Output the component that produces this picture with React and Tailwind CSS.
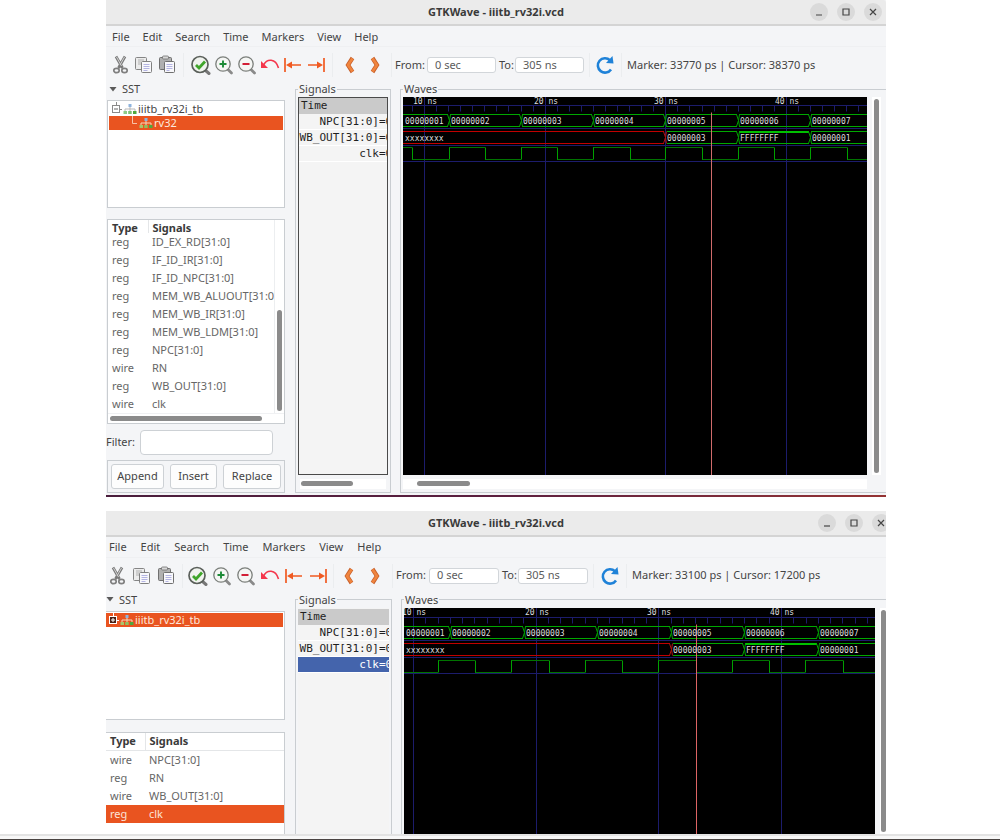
import React from "react";

const menus = ["File", "Edit", "Search", "Time", "Markers", "View", "Help"];

function Icon({ children }) {
  return (
    <svg width="20" height="20" viewBox="0 0 20 20" fill="none" className="shrink-0" aria-hidden="true">
      {children}
    </svg>
  );
}

const Cut = () => (
  <Icon>
    <path d="M5 1.500 11.500 13M14 1.500 7.500 13" stroke="#7a7a7a" strokeWidth="2.800" />
    <path d="M5.500 2 10.500 11M13.500 2 9 10" stroke="#d0d0d0" strokeWidth="1" />
    <ellipse cx="5.500" cy="15.500" rx="2.700" ry="2.200" stroke="#808080" strokeWidth="1.700" />
    <ellipse cx="13.500" cy="15.500" rx="2.700" ry="2.200" stroke="#808080" strokeWidth="1.700" />
  </Icon>
);
const Copy = () => (
  <Icon>
    <rect x="1.500" y="2.500" width="11" height="12" rx="1" fill="#ececec" stroke="#858585" />
    <path d="M4 5h6M4 7h3M4 9h3" stroke="#b0b0b0" />
    <rect x="7.500" y="6.500" width="10" height="11" rx="1" fill="#f8f8fb" stroke="#808080" />
    <path d="M9.500 9.500h6M9.500 11.500h6M9.500 13.500h6M9.500 15.500h4" stroke="#b4b4e2" />
  </Icon>
);
const Paste = () => (
  <Icon>
    <rect x="2.500" y="2.500" width="12" height="12" rx="1" fill="#b0b0b0" stroke="#707070" />
    <rect x="5.500" y="1" width="6" height="3" rx="1" fill="#d8d8d8" stroke="#707070" strokeWidth="0.800" />
    <rect x="7.500" y="6.500" width="10" height="11" rx="1" fill="#f8f8fb" stroke="#707070" />
    <path d="M9.500 9.500h6M9.500 11.500h6M9.500 13.500h6M9.500 15.500h3" stroke="#b4b4e2" />
  </Icon>
);
const ZoomFit = () => (
  <Icon>
    <path d="m14 15 4 3.500" stroke="#777" strokeWidth="3" strokeLinecap="round" />
    <circle cx="9" cy="9.500" r="8" fill="#f0f3ee" stroke="#5a5f5a" strokeWidth="1.700" />
    <path d="m5 10 3 3 6-6.500" stroke="#3fa52a" strokeWidth="2.800" />
  </Icon>
);
const ZoomIn = () => (
  <Icon>
    <path d="m14 14.500 3.500 3.500" stroke="#8a8a8a" strokeWidth="2.800" strokeLinecap="round" />
    <circle cx="9" cy="9" r="7.200" fill="#f5f6f4" stroke="#7b7f7b" strokeWidth="1.300" />
    <path d="M9 5.500v7M5.500 9h7" stroke="#1c8a36" strokeWidth="1.900" />
  </Icon>
);
const ZoomOut = () => (
  <Icon>
    <path d="m14 14.500 3.500 3.500" stroke="#8a8a8a" strokeWidth="2.800" strokeLinecap="round" />
    <circle cx="9" cy="9" r="7.200" fill="#f5f6f4" stroke="#7b7f7b" strokeWidth="1.300" />
    <path d="M5.500 9h7" stroke="#d0142c" strokeWidth="1.900" />
  </Icon>
);
const Undo = () => (
  <Icon>
    <path d="M3.500 10C7 3.500 15.500 3 18.500 13" stroke="#f4364c" strokeWidth="1.600" />
    <path d="M1 6v7h7Z" fill="#f4364c" />
  </Icon>
);
const ToStart = () => (
  <Icon>
    <path d="M2 3v14M5 10h13" stroke="#f05a22" strokeWidth="1.700" />
    <path d="m3 10 6-3.500v7Z" fill="#f05a22" />
  </Icon>
);
const ToEnd = () => (
  <Icon>
    <path d="M18 3v14M2 10h13" stroke="#f05a22" strokeWidth="1.700" />
    <path d="m17 10-6-3.500v7Z" fill="#f05a22" />
  </Icon>
);
const Prev = () => (
  <Icon>
    <path d="M12.500 3 8 10l4.500 7" stroke="#c8612c" strokeWidth="4.200" />
    <path d="M12.500 3.500 8 10l4.500 6.500" stroke="#f0853e" strokeWidth="2.600" />
  </Icon>
);
const Next = () => (
  <Icon>
    <path d="m7.500 3 4.500 7-4.500 7" stroke="#c8612c" strokeWidth="4.200" />
    <path d="m7.500 3.500 4.500 6.500-4.500 6.500" stroke="#f0853e" strokeWidth="2.600" />
  </Icon>
);
const Reload = () => (
  <Icon>
    <path d="M15 5.200A7.200 7.200 0 1 0 16 14.500" stroke="#1f82d8" strokeWidth="2.600" />
    <path d="m17.500 1 1 7.500-7.500-.5Z" fill="#1f82d8" />
  </Icon>
);

function ScopeIcon({ onOrange }) {
  const stem = onOrange ? "#f6d5b8" : "#b9b9b9";
  return (
    <svg width="14" height="12" viewBox="0 0 14 12" className="shrink-0" aria-hidden="true">
      <path d="M7 3v5M2 8V6h10v2" stroke={stem} fill="none" />
      <rect x="5.500" y="1" width="3" height="3" fill="#8fb4de" />
      <rect x="0.500" y="8" width="3.500" height="3" fill={onOrange ? "#a9c46a" : "#8ecb86"} />
      <rect x="5.200" y="8" width="3.500" height="3" fill={onOrange ? "#8fbf5f" : "#7cc274"} />
      <rect x="10" y="8" width="3.500" height="3" fill="#4fa83e" />
    </svg>
  );
}

function Expander({ open, selected }) {
  const c = selected ? "#ffffff" : "#8a8a8a";
  return (
    <svg width="11" height="14" viewBox="0 0 11 14" className="shrink-0" aria-hidden="true">
      <path d="M5.500 0v3M9 7.500h2" stroke={c} />
      <rect x="1.500" y="3.500" width="7" height="7" fill={selected ? "#4a2015" : "#ffffff"} stroke={c} />
      <path d={open ? "M3 7h4" : "M3 7h4M5 5v4"} stroke={selected ? "#fff" : "#666"} />
    </svg>
  );
}

function Tool({ label, className, children }) {
  return (
    <button type="button" aria-label={label} className={`flex h-6 shrink-0 items-center justify-center ${className}`}>
      {children}
    </button>
  );
}

function Separator({ className }) {
  return (
    <div className={`flex h-6 shrink-0 justify-center ${className}`}>
      <div className="w-px bg-[#ebedef]" />
    </div>
  );
}

function TitleBar({ c }) {
  return (
    <header className={`grid h-[26px] shrink-0 grid-cols-[1fr_auto_1fr] items-center overflow-hidden border-b-2 border-[#d4d4d4] bg-[#ebebeb] ${c.titleBar}`}>
      <h1 className="col-start-2 text-[11px] leading-4 font-bold text-[#3a3a3a]">GTKWave - iiitb_rv32i.vcd</h1>
      <div className={`flex justify-end ${c.controls}`}>
        {[
          ["Minimize", "M6 12h6"],
          ["Maximize", "M6 6h6v6H6z"],
          ["Close", "m6 6 6 6m0-6-6 6"],
        ].map(([label, d]) => (
          <button key={label} type="button" aria-label={label} className="size-[18px] shrink-0 rounded-full bg-[#dadada]">
            <svg width="18" height="18" viewBox="0 0 18 18" fill="none" stroke="#454545" strokeWidth="1.200">
              <path d={d} />
            </svg>
          </button>
        ))}
      </div>
    </header>
  );
}

function Toolbar({ c }) {
  return (
    <div className={`flex h-9 shrink-0 items-center overflow-hidden ${c.toolbar}`}>
      <Tool label="Cut" className={c.tool}><Cut /></Tool>
      <Tool label="Copy" className={c.tool}><Copy /></Tool>
      <Tool label="Paste" className={c.tool}><Paste /></Tool>
      <Separator className={c.sepA} />
      <Tool label="Zoom fit" className={c.tool}><ZoomFit /></Tool>
      <Tool label="Zoom in" className={c.tool}><ZoomIn /></Tool>
      <Tool label="Zoom out" className={c.tool}><ZoomOut /></Tool>
      <Tool label="Zoom undo" className={c.tool}><Undo /></Tool>
      <Tool label="Zoom to start" className={c.tool}><ToStart /></Tool>
      <Tool label="Zoom to end" className={c.tool}><ToEnd /></Tool>
      <Separator className={c.sepB} />
      <Tool label="Previous edge" className={c.edge}><Prev /></Tool>
      <Tool label="Next edge" className={c.edge}><Next /></Tool>
      <Separator className="w-2" />
      <label htmlFor={`${c.id}-from`} className={`shrink-0 ${c.fromLabel}`}>From:</label>
      <input id={`${c.id}-from`} defaultValue="0 sec" className={`mr-[3px] h-4 min-w-0 shrink-0 rounded-[3px] border border-[#d2d6da] bg-white px-[7px] text-[#5c5c5c] ${c.field}`} />
      <label htmlFor={`${c.id}-to`} className="w-4 shrink-0">To:</label>
      <input id={`${c.id}-to`} defaultValue="305 ns" className={`h-4 min-w-0 shrink-0 rounded-[3px] border border-[#d2d6da] bg-white px-[7px] text-[#5c5c5c] ${c.field}`} />
      <Separator className={c.sepC} />
      <Tool label="Reload" className={c.reload}><Reload /></Tool>
      <Separator className="w-3" />
      <output className="whitespace-nowrap">{c.status}</output>
    </div>
  );
}

function ScopeTree({ c }) {
  return (
    <ul className={`shrink-0 border border-[#c9cdd1] bg-white pt-px ${c.box} ${c.treeBox}`}>
      {c.scopes.map((s) => (
        <li key={s.name} className={`flex h-[14px] items-center leading-[14px] ${s.row}`}>
          {s.child ? (
            <svg width="5" height="14" viewBox="0 0 5 14" className="mr-px shrink-0" aria-hidden="true">
              <path d="M0.500 0v7.500H5" fill="none" stroke="#f7c3a8" />
            </svg>
          ) : (
            <Expander open={s.open} selected={s.selected} />
          )}
          <span className="mx-px flex"><ScopeIcon onOrange={s.selected} /></span>
          <span>{s.name}</span>
        </li>
      ))}
    </ul>
  );
}

function SignalTable({ c }) {
  return (
    <table className={`w-full table-fixed border-collapse text-left ${c.table}`}>
      <thead className="sticky top-0 bg-white text-[#3a3a3a]">
        <tr className={`leading-4 ${c.headRow}`}>
          <th className={`border-r border-b border-[#e4e6e8] p-0 ${c.typeCell}`}>Type</th>
          <th className="border-b border-[#e4e6e8] p-0 pl-1">Signals</th>
        </tr>
      </thead>
      <tbody>
        {c.signals.map(([type, name]) => {
          const on = c.selectedSignal === name;
          return (
            <tr key={name} className={on ? "h-[18px] bg-[#e95420] leading-[18px] text-[#fbe3d8]" : "h-[18px] leading-[18px] text-[#666666]"}>
              <td className={`p-0 ${c.typeCell}`}>{type}</td>
              <td className="overflow-hidden p-0 pl-1 whitespace-nowrap">{name}</td>
            </tr>
          );
        })}
      </tbody>
    </table>
  );
}

function Frame({ title, className, children }) {
  return (
    <fieldset className={`flex min-w-0 flex-col border border-[#c9cdd1] pt-0.5 ${className}`}>
      <legend className="h-3 px-px leading-3">{title}</legend>
      {children}
    </fieldset>
  );
}

function SignalNames({ c }) {
  const base = "flex h-4 justify-end border-b border-white leading-4 whitespace-pre";
  return (
    <div className={`min-h-0 flex-1 overflow-hidden bg-[#f4f4f4] font-['DejaVu_Sans_Mono',monospace] text-[11px] text-[#1f1f1f] ${c.names}`}>
      <div className="h-4 bg-[#cacaca] pl-0.5 leading-4">Time</div>
      {["NPC[31:0]", "WB_OUT[31:0]", "clk"].map((n) => (
        <div key={n} className={n === c.selectedName ? `${base} bg-[#4464ac] text-white` : base}>
          <span>{n}</span>
          <span className={`shrink-0 overflow-hidden ${c.valueCell}`}>=0</span>
        </div>
      ))}
    </div>
  );
}

function busPath(xs, top, bottom) {
  let d = "";
  xs.slice(0, -1).forEach((x, i) => {
    const a = i === 0 ? x : x + 1;
    const b = xs[i + 1] - 1;
    d += `M${a} ${top}H${b}M${a} ${bottom}H${b}`;
  });
  return d;
}

function Transition({ x, top, bottom, color = "#00a000" }) {
  const m = (top + bottom) / 2;
  return (
    <path
      d={`M${x - 1.5} ${top}L${x + 0.5} ${m}L${x - 1.5} ${bottom}M${x + 1.5} ${top}L${x + 0.5} ${m}L${x + 1.5} ${bottom}`}
      stroke={color}
      fill="none"
    />
  );
}

function Waveform({ w }) {
  const end = 4000;
  const { y } = w;
  const ticks = [];
  for (let i = -1; i < 38; i++) ticks.push(Math.round(w.grid[0] + (i * (w.grid[3] - w.grid[0])) / 30) + 0.5);
  const rises = w.clk.filter((_, i) => i % 2 === 0);
  let highs = "";
  let lows = "";
  let edges = "";
  let cursor = 0;
  rises.forEach((r, i) => {
    const f = w.clk[i * 2 + 1];
    if (r > cursor) lows += `M${cursor} ${y.clkLow}H${r}`;
    highs += `M${r} ${y.clkHigh}H${f}`;
    if (r > 0) edges += `M${r + 0.5} ${y.clkHigh}V${y.clkLow}`;
    edges += `M${f + 0.5} ${y.clkHigh}V${y.clkLow}`;
    cursor = f;
  });
  lows += `M${cursor} ${y.clkLow}H${end}`;
  const change = w.bus[4];

  return (
    <svg width="100%" height="100%" className="block bg-black" fill="none" role="img" aria-label="Waveforms">
      <g stroke="#1c1c6c">
        {w.grid.map((x) => <path key={x} d={`M${x + 0.5} 0V4000`} />)}
        {y.rules.map((r) => <path key={r} d={`M0 ${r}H${end}`} />)}
        {ticks.map((x) => <path key={x} d={`M${x} ${y.rules[0]}v6`} />)}
      </g>
      <path d={busPath([0, ...w.bus, end], y.aTop, y.aBottom)} stroke="#00a800" />
      {w.bus.map((x) => <Transition key={x} x={x} top={y.aTop} bottom={y.aBottom} />)}
      <path d={busPath([0, w.bus[3]], y.bTop, y.bBottom)} stroke="#c00000" />
      <path d={busPath([w.bus[3] + 2, change, w.bus[5], end], y.bTop, y.bBottom)} stroke="#00a800" />
      <path d={`M${change + 1} ${y.bTop + 0.5}H${w.bus[5] - 1}`} stroke="#00c000" strokeWidth="2" />
      <Transition x={w.bus[3]} top={y.bTop} bottom={y.bBottom} color="#b01010" />
      <Transition x={change} top={y.bTop} bottom={y.bBottom} />
      <Transition x={w.bus[5]} top={y.bTop} bottom={y.bBottom} />
      <path d={highs + lows} stroke="#007400" />
      <path d={edges} stroke="#00a000" />
      <path d={`M${w.marker + 0.5} ${y.rules[0] + 7}V4000`} stroke={w.markerColor} />
      <g fill="#dedede" fontSize="8" fontFamily="'DejaVu Sans Mono', monospace">
        {w.grid.map((x, i) => (
          <text key={x} x={x - 11} y={y.time}>{`${i + 1}0 ns`}</text>
        ))}
        {[0, ...w.bus].map((x, i) => (
          <text key={x} x={x + 2} y={y.aTop + 9}>{`0000000${i + 1}`}</text>
        ))}
        <text x="2" y={y.bTop + 9}>xxxxxxxx</text>
        <text x={w.bus[3] + 2} y={y.bTop + 9}>00000003</text>
        <text x={change + 2} y={y.bTop + 9}>FFFFFFFF</text>
        <text x={w.bus[5] + 2} y={y.bTop + 9}>00000001</text>
      </g>
    </svg>
  );
}

function WaveWindow({ c }) {
  return (
    <section className={`flex flex-col overflow-hidden bg-[#f4f5f7] ${c.window}`}>
      <TitleBar c={c} />
      <nav className={`flex h-[21px] shrink-0 items-center border-b border-[#eff0f2] pt-0.5 ${c.menu}`}>
        {menus.map((m) => (
          <button key={m} type="button">{m}</button>
        ))}
      </nav>
      <Toolbar c={c} />
      <div className="flex min-h-0 flex-1">
        <aside className={`flex shrink-0 flex-col ${c.aside}`}>
          <button type="button" className={`mb-[5px] flex h-3 shrink-0 items-center gap-[5px] leading-3 ${c.sst}`}>
            <svg width="8" height="5" viewBox="0 0 8 5" aria-hidden="true"><path d="M0.500 0h7L4 4.500Z" fill="#5a5a5a" /></svg>
            SST
          </button>
          <ScopeTree c={c} />
          <div className={`border border-[#c9cdd1] bg-white ${c.box} ${c.listBox}`}>
            <div className="flex">
              <div className="min-w-0 flex-1 overflow-hidden"><SignalTable c={c} /></div>
              {c.full && (
                <div className="flex w-[10px] shrink-0 items-end justify-center border-l border-[#eceef0] pb-0.5">
                  <div className="h-[101px] w-[5px] rounded-full bg-[#8b8b8b]" />
                </div>
              )}
            </div>
            {c.full && (
              <div className="flex h-[10px] items-center border-t border-[#f0f1f3] px-0.5">
                <div className="h-[5px] w-[152px] rounded-full bg-[#8b8b8b]" />
              </div>
            )}
          </div>
          {c.full && (
            <>
              <div className="mt-1.5 flex h-[25px] items-center">
                <label htmlFor={`${c.id}-filter`} className="w-[34px] shrink-0">Filter:</label>
                <input id={`${c.id}-filter`} className="mr-3 h-[25px] min-w-0 flex-1 rounded-[4px] border border-[#cdd1d5] bg-white px-2" />
              </div>
              <div className="mt-[5px] ml-px flex h-[33px] items-center justify-between border border-[#c9cdd1] px-[3px]">
                {[["Append", "w-[53px]"], ["Insert", "w-[47px]"], ["Replace", "w-[58px]"]].map(([b, w]) => (
                  <button key={b} type="button" className={`h-[25px] rounded-[3px] border border-[#cdd1d5] bg-[#fdfdfd] ${w}`}>{b}</button>
                ))}
              </div>
            </>
          )}
        </aside>
        <Frame title="Signals" className={c.signalsFrame}>
          <SignalNames c={c} />
          {c.full && (
            <div className="mx-0.5 mt-1 mb-[3px] flex h-[10px] shrink-0 items-center bg-white px-px">
              <div className="h-[5px] w-[52px] rounded-full bg-[#8b8b8b]" />
            </div>
          )}
        </Frame>
        <Frame title="Waves" className={c.wavesFrame}>
          <div className="flex min-h-0 flex-1">
            <div className="relative min-w-0 flex-1 overflow-hidden">
              <div className="absolute inset-0"><Waveform w={c.wave} /></div>
            </div>
            <div className={`flex shrink-0 bg-white py-0.5 ${c.vscroll}`}>
              <div className="w-[5px] rounded-full bg-[#8b8b8b]" />
            </div>
          </div>
          {c.full && (
            <div className="mt-1 mr-[19px] mb-[3px] flex h-[10px] shrink-0 items-center bg-white pl-[14px]">
              <div className="h-[5px] w-[53px] rounded-full bg-[#8b8b8b]" />
            </div>
          )}
        </Frame>
      </div>
      {c.full && <div className="mt-[2px] h-0.5 shrink-0 bg-linear-to-r from-[#4a1d3c] via-[#5c1f3f] to-[#953333]" />}
    </section>
  );
}

const first = {
  id: "first",
  full: true,
  window: "shrink-0",
  titleBar: "rounded-tr-[3px]",
  controls: "gap-[9px] pr-1",
  menu: "gap-[13px] pl-1.5",
  toolbar: "pl-[3px]",
  tool: "w-[23px]",
  sepA: "w-[11px]",
  sepB: "w-[10px]",
  sepC: "w-[11px]",
  edge: "w-[25px]",
  fromLabel: "w-8",
  field: "w-[69px]",
  reload: "w-5",
  status: "Marker: 33770 ps | Cursor: 38370 ps",
  aside: "w-[179px]",
  sst: "pl-[3px]",
  box: "ml-px",
  treeBox: "h-[108px]",
  listBox: "mt-[11px] shrink-0",
  table: "-mt-[5px]",
  headRow: "h-[17px]",
  typeCell: "w-10 pl-1",
  scopes: [
    { name: "iiitb_rv32i_tb", open: true, row: "pl-[3px]" },
    { name: "rv32", child: true, selected: true, row: "mx-px bg-[#e95420] pl-[23px] text-[#fde8dd]" },
  ],
  signals: [
    ["reg", "ID_EX_RD[31:0]"],
    ["reg", "IF_ID_IR[31:0]"],
    ["reg", "IF_ID_NPC[31:0]"],
    ["reg", "MEM_WB_ALUOUT[31:0]"],
    ["reg", "MEM_WB_IR[31:0]"],
    ["reg", "MEM_WB_LDM[31:0]"],
    ["reg", "NPC[31:0]"],
    ["wire", "RN"],
    ["reg", "WB_OUT[31:0]"],
    ["wire", "clk"],
  ],
  signalsFrame: "ml-[10px] w-24 shrink-0 px-0.5",
  names: "border border-[#4a4a4a]",
  valueCell: "w-2",
  wavesFrame: "ml-[9px] flex-1 border-r-0 pl-0.5",
  vscroll: "ml-[5px] mr-[5px] w-[9px] justify-center",
  wave: {
    grid: [21, 142, 262, 383],
    bus: [46, 118, 190, 262, 335, 407],
    clk: [0, 9, 46, 82, 118, 154, 190, 227, 262, 299, 335, 371, 407, 444],
    marker: 308,
    markerColor: "#d06c6c",
    y: { time: 7, rules: [8.5, 31.5, 48.5, 64.5], aTop: 17.5, aBottom: 29.5, bTop: 34.5, bBottom: 46.5, clkHigh: 50.5, clkLow: 62.5 },
  },
};

const second = {
  id: "second",
  full: false,
  window: "min-h-0 flex-1",
  titleBar: "",
  controls: "-mr-1 gap-[9px]",
  menu: "gap-[14px] pl-[3px]",
  toolbar: "pl-0",
  tool: "w-6",
  sepA: "w-2",
  sepB: "w-1.5",
  sepC: "w-[11px]",
  edge: "w-[26px]",
  fromLabel: "w-[33px]",
  field: "w-[70px]",
  reload: "w-[21px]",
  status: "Marker: 33100 ps | Cursor: 17200 ps",
  aside: "w-[179px]",
  sst: "pl-0",
  box: "border-l-0",
  treeBox: "h-[109px]",
  listBox: "mt-3 min-h-0 flex-1 border-b-0",
  table: "mb-0",
  headRow: "h-[18px]",
  typeCell: "w-[39px] pl-1",
  scopes: [
    { name: "iiitb_rv32i_tb", selected: true, row: "mr-px bg-[#e95420] pl-0.5 text-[#fde8dd]" },
  ],
  signals: [
    ["wire", "NPC[31:0]"],
    ["reg", "RN"],
    ["wire", "WB_OUT[31:0]"],
    ["reg", "clk"],
  ],
  selectedSignal: "clk",
  selectedName: "clk",
  signalsFrame: "ml-[10px] w-[97px] shrink-0 border-b-0 px-0.5",
  names: "pt-px",
  valueCell: "w-[10px]",
  wavesFrame: "ml-[9px] flex-1 border-r-0 border-b-0 pl-0.5",
  vscroll: "ml-[5px] w-1.5 justify-end",
  wave: {
    grid: [9, 132, 254, 377],
    bus: [46, 120, 193, 267, 340, 414],
    clk: [34, 71, 107, 145, 181, 218, 254, 292, 328, 365, 401, 439],
    marker: 292,
    markerColor: "#dd6464",
    y: { time: 7, rules: [9.5, 32.5, 49.5, 65.5], aTop: 18.5, aBottom: 30.5, bTop: 35.5, bBottom: 47.5, clkHigh: 52.5, clkLow: 64.5 },
  },
};

export default function App() {
  return (
    <div className="flex h-screen flex-col bg-white font-['Noto_Sans','Open_Sans',sans-serif] text-[11px] text-[#444444]">
      <main className="flex min-h-0 flex-1 flex-col gap-[14px] overflow-hidden pr-[114px] pl-[106px]">
        <WaveWindow c={first} />
        <WaveWindow c={second} />
      </main>
      <footer className="h-1.5 shrink-0 border-t-2 border-b border-t-[#e3e3e3] border-b-[#4a4442] bg-[#f7f7f7]" />
    </div>
  );
}
